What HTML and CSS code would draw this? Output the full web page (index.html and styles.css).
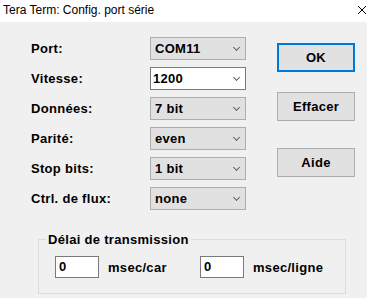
FILE: index.html
```html
<!DOCTYPE html>
<html lang="fr">
<head>
    <meta charset="UTF-8">
    <title>Tera Term: Config. port série</title>
    <link rel="stylesheet" href="styles.css">
</head>
<body>
    <div class="window">
        <div class="titlebar">
            <span class="title">Tera Term: Config. port série</span>
            <svg class="close" width="10" height="10" viewBox="0 0 10 10">
                <path d="M1 1 L9 9 M9 1 L1 9" stroke="#000" stroke-width="1" fill="none"/>
            </svg>
        </div>

        <div class="dialog">
            <div class="top">
                <div class="form">
                    <label>Port:</label>
                    <div class="combo"><span>COM11</span><i class="arrow"></i></div>
                    <label>Vitesse:</label>
                    <div class="combo editable"><span>1200</span><i class="arrow"></i></div>
                    <label>Données:</label>
                    <div class="combo"><span>7 bit</span><i class="arrow"></i></div>
                    <label>Parité:</label>
                    <div class="combo"><span>even</span><i class="arrow"></i></div>
                    <label>Stop bits:</label>
                    <div class="combo"><span>1 bit</span><i class="arrow"></i></div>
                    <label>Ctrl. de flux:</label>
                    <div class="combo"><span>none</span><i class="arrow"></i></div>
                </div>

                <div class="buttons">
                    <button class="btn default">OK</button>
                    <button class="btn clear">Effacer</button>
                    <button class="btn help">Aide</button>
                </div>
            </div>

            <fieldset class="group">
                <legend>Délai de transmission</legend>
                <div class="delay-row">
                    <div class="field">0</div>
                    <span class="unit">msec/car</span>
                    <div class="field">0</div>
                    <span class="unit">msec/ligne</span>
                </div>
            </fieldset>
        </div>
    </div>
</body>
</html>
```

FILE: styles.css
```css
* {
    margin: 0;
    padding: 0;
    box-sizing: border-box;
}

body {
    width: 367px;
    height: 298px;
    overflow: hidden;
    background: #f0f0f0;
    font-family: 'Liberation Sans', Arial, sans-serif;
    color: #000;
}

.titlebar {
    height: 22px;
    background: #fff;
    display: flex;
    justify-content: space-between;
    align-items: center;
    padding: 0 0 2px 3px;
}

.title {
    font-family: 'Liberation Sans', Arial, sans-serif;
    font-size: 12px;
    color: #000;
}

.dialog {
    height: 276px;
    background: #f0f0f0;
    padding: 15px 0 0 0;
}

.top {
    display: flex;
}

.form {
    display: grid;
    grid-template-columns: 119px 96px;
    grid-auto-rows: 23px;
    row-gap: 7px;
    padding-left: 31px;
    align-items: center;
}

.form label {
    font-size: 13px;
    font-weight: bold;
    letter-spacing: 0.3px;
}

.combo {
    height: 23px;
    background: #e1e1e1;
    border: 1px solid #adadad;
    display: flex;
    align-items: center;
    justify-content: space-between;
    padding: 0 5px 0 4px;
    font-size: 13px;
    font-weight: bold;
    letter-spacing: 0.3px;
}

.combo.editable {
    background: #fff;
    border-color: #7a7a7a;
    padding-left: 2px;
}

.arrow {
    width: 5px;
    height: 5px;
    border-right: 1px solid #606060;
    border-bottom: 1px solid #606060;
    transform: rotate(45deg);
    margin-top: -3px;
    margin-right: 1px;
}

.buttons {
    display: flex;
    flex-direction: column;
    margin-left: 31px;
    padding-top: 6px;
}

.btn {
    width: 78px;
    height: 29px;
    background: #e1e1e1;
    border: 1px solid #adadad;
    font-family: 'Liberation Sans', Arial, sans-serif;
    font-size: 13px;
    font-weight: bold;
    letter-spacing: 0.3px;
    color: #000;
}

.btn.default {
    border: 2px solid #0078d7;
}

.btn.clear {
    margin-top: 20px;
}

.btn.help {
    margin-top: 27px;
}

.group {
    margin: 22px 0 0 38px;
    width: 304px;
    height: 62px;
    border: 1px solid #dcdcdc;
    padding: 0 0 0 7px;
}

.group legend {
    padding: 0 2px;
    font-size: 13px;
    font-weight: bold;
    letter-spacing: 0.3px;
}

.delay-row {
    display: flex;
    align-items: center;
    margin-top: 9px;
    padding-left: 9px;
}

.field {
    width: 44px;
    height: 22px;
    background: #fff;
    border: 1px solid #7a7a7a;
    font-size: 13px;
    font-weight: bold;
    padding: 2px 0 0 3px;
}

.unit {
    font-size: 13px;
    font-weight: bold;
    letter-spacing: 0.3px;
    margin-left: 9px;
    width: 92px;
}
```
